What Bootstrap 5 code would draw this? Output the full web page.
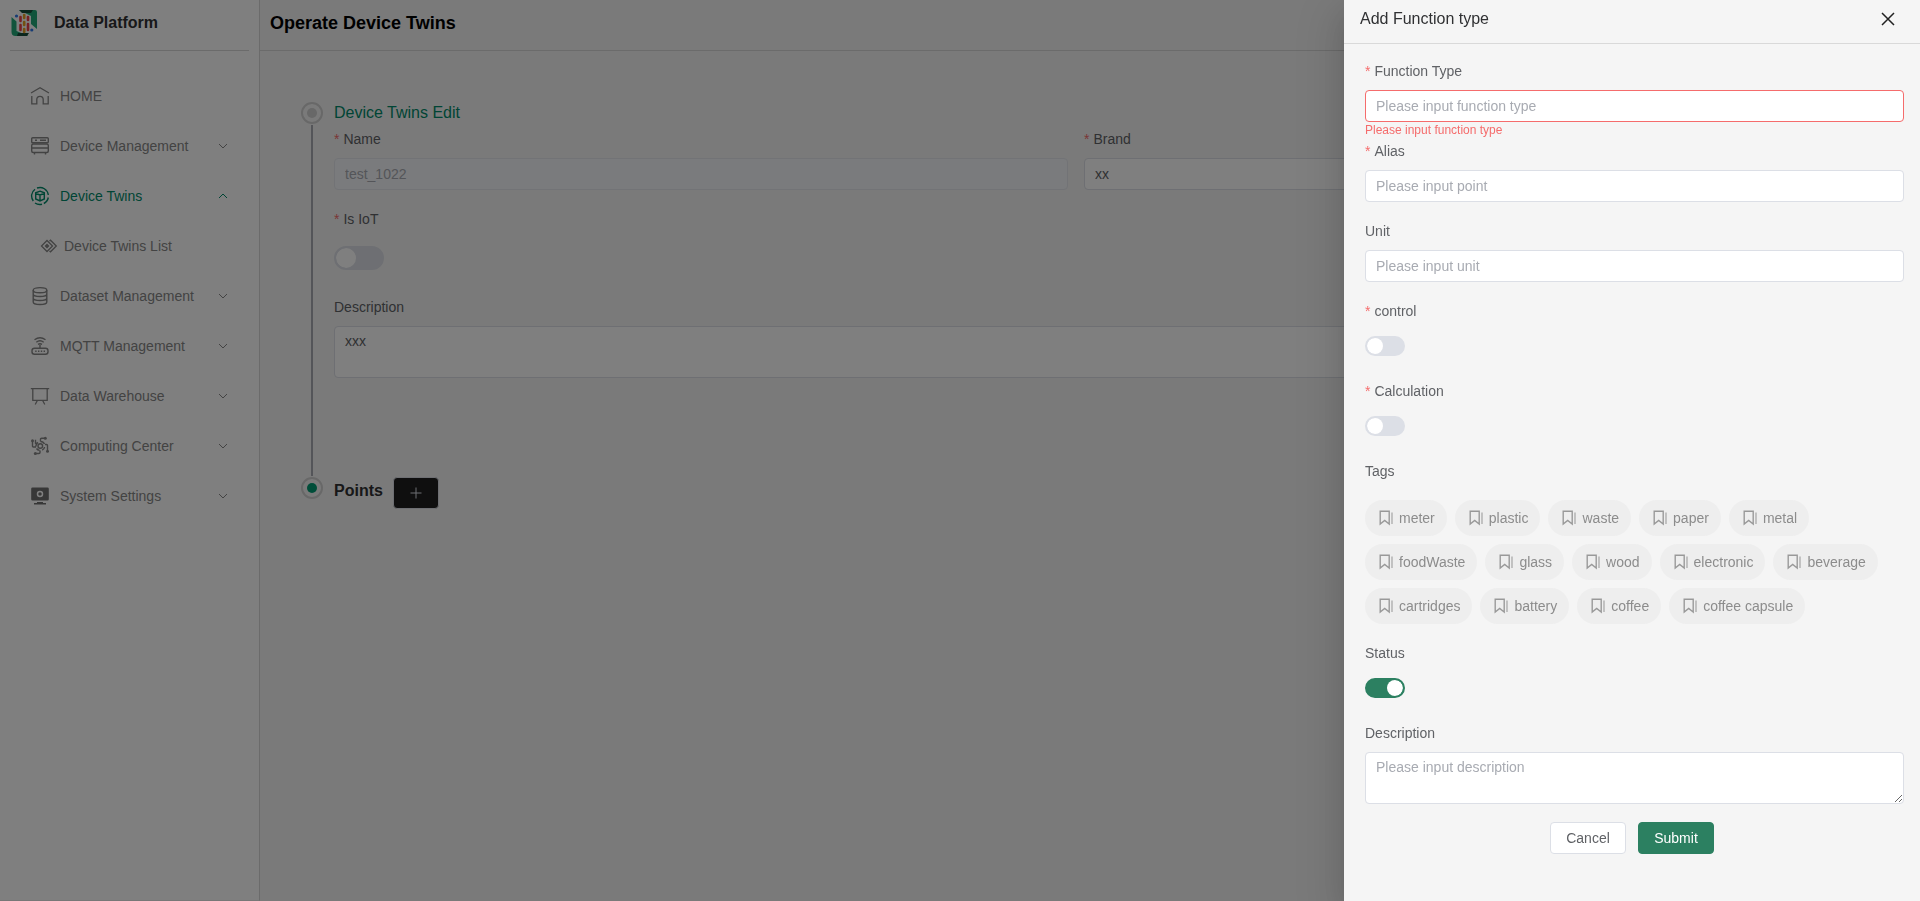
<!DOCTYPE html>
<html lang="en">
<head>
<meta charset="utf-8">
<meta name="viewport" content="width=device-width, initial-scale=1">
<title>Data Platform</title>
<link href="https://cdn.jsdelivr.net/npm/bootstrap@5.3.0/dist/css/bootstrap.min.css" rel="stylesheet">
<style>
:root { --line: #d6d6d6; --brand: #2c8061; --accent: #009a72; --field-line: #dcdfe6; --label: #606266; }
body { font-family: "Liberation Sans", Arial, sans-serif; font-size: 14px; line-height: 22px; color: #303133; background: #f5f5f5; }
svg { display: block; flex: none; }
h1, h2, h3, .brand-name { margin: 0; font-weight: 700; font-size: 16px; line-height: 28px; color: #303133; }

/* Sidebar */
.sidebar { width: 260px; flex: none; background: #fff; border-right: 1px solid var(--line); border-bottom: 1px solid #eee; }
.brand-bar { height: 51px; margin: 0 10px 20px 10px; padding-bottom: 5px; border-bottom: 1px solid var(--line); gap: 16px; }
.menu-link { height: 50px; padding: 0 30px; gap: 10px; color: #868686; text-decoration: none; }
.menu-link svg { stroke: currentColor; fill: none; }
.menu-link.open { color: #008a6a; }
.menu-link.sub { padding-left: 40px; gap: 6px; }

/* Page */
.page-head { height: 51px; padding: 0 10px 5px; border-bottom: 1px solid var(--line); }
.page-head h1 { font-size: 18px; color: #000; }
.page-body { padding: 51px 102px 0 40px; }
.step { gap: 10px; }
.step-rail { width: 24px; gap: 1px; padding-bottom: 1px; }
.step-dot { width: 22px; height: 22px; border: 2px solid #d0d0d0; border-radius: 50%; }
.step-dot::before { content: ""; width: 10px; height: 10px; border-radius: 50%; background: #d0d0d0; }
.step-dot.active::before { background: var(--accent); }
.step-line { width: 2px; background: #a8abb2; }
.step-content { padding-bottom: 81px; }
.step-title { font-weight: 400; line-height: 22px; margin-bottom: 4px; color: #008a6a; }
.btn-add { width: 46px; height: 32px; padding: 0; border-radius: 4px; --bs-btn-bg: #1f1f1f; --bs-btn-border-color: #dcdfe6; --bs-btn-color: #dcdfe6; --bs-btn-hover-bg: #333; }

/* Form parts */
.field { margin-bottom: 18px; }
.field > label, .field > .field-label { display: block; margin-bottom: 8px; color: var(--label); }
.required::before { content: "*"; color: #f56c6c; margin-right: 4px; }
.form-control { font-size: 14px; line-height: 21px; padding: 4px 10px; border-color: var(--field-line); border-radius: 4px; color: var(--label); background-color: #fff; }
input.form-control { height: 32px; }
textarea.form-control { min-height: 52px; height: 52px; }
.form-control::placeholder { color: #a8abb2; }
.form-control:disabled { background-color: #f5f7fa; border-color: #e4e7ed; color: #a8abb2; }
.form-control.is-invalid { border-color: #f56c6c; background-image: none; padding-right: 10px; }
.field-error { font-size: 12px; line-height: 16px; height: 18px; margin-bottom: -18px; color: #f56c6c; }
.switch-row { height: 32px; margin: 0; padding: 0; min-height: 0; }
.switch-row .form-check-input { width: 40px; height: 20px; margin: 0; border: 2px solid var(--field-line); background-color: var(--field-line); --bs-form-switch-bg: none;
  background-image: url("data:image/svg+xml,%3csvg xmlns='http://www.w3.org/2000/svg' viewBox='0 0 16 16'%3e%3ccircle cx='8' cy='8' r='8' fill='%23fff'/%3e%3c/svg%3e"); }
.switch-row .form-check-input:checked { background-color: var(--brand); border-color: var(--brand);
  background-image: url("data:image/svg+xml,%3csvg xmlns='http://www.w3.org/2000/svg' viewBox='0 0 16 16'%3e%3ccircle cx='8' cy='8' r='8' fill='%23fff'/%3e%3c/svg%3e"); }
.switch-row.large { height: 40px; }
.switch-row.large .form-check-input { width: 50px; height: 24px; }

/* Drawer */
.drawer.offcanvas { --bs-offcanvas-width: 30%; border: 0; background: #f5f5f5; box-shadow: 0 16px 48px 16px rgba(0,0,0,.08), 0 12px 32px rgba(0,0,0,.12), 0 8px 16px -8px rgba(0,0,0,.16); }
.drawer-head { height: 44px; padding: 0 16px 5px; border-bottom: 1px solid #d9d9d9; }
.drawer-head h2 { font-weight: 400; }
.drawer-close { width: 20px; height: 20px; margin-right: 6px; color: #222; }
.drawer-fields { padding: 16px 16px 0 21px; }
.tag-list { padding-top: 10px; gap: 8px; }
.tag-chip { height: 36px; padding: 0 12px; gap: 4px; border: 0; border-radius: 18px; background: #eee; color: #8c8c8c; }
.drawer-actions { gap: 12px; }
.drawer-actions .btn { width: 76px; height: 32px; padding: 0; font-size: 14px; border-radius: 4px; }
.btn-plain { --bs-btn-bg: #fff; --bs-btn-border-color: #dcdfe6; --bs-btn-color: #606266; --bs-btn-hover-bg: #f5f5f5; }
.btn-brand { --bs-btn-bg: #2c8061; --bs-btn-border-color: #2c8061; --bs-btn-color: #fff; --bs-btn-hover-bg: #256e53; --bs-btn-hover-color: #fff; font-weight: 500; }
</style>
</head>
<body>
<svg class="d-none" aria-hidden="true">
  <symbol id="chev-down" viewBox="0 0 12 12"><path d="M2 4l4 4 4-4"/></symbol>
  <symbol id="chev-up" viewBox="0 0 12 12"><path d="M2 8l4-4 4 4"/></symbol>
  <symbol id="tag" viewBox="0 0 18 18"><path d="M3.200 2.200h9v12.800l-4.500-3.500-4.500 3.500z" fill="none" stroke="#999" stroke-width="1.400"/><path d="M15 3.500v11.500" stroke="#aaa" stroke-width="1.300"/></symbol>
</svg>

<div class="d-flex min-vh-100">
  <aside class="sidebar">
    <div class="brand-bar d-flex align-items-center">
      <svg width="28" height="28" viewBox="0 0 28 28" aria-hidden="true">
        <path d="M9 1h16q2 0 2 2v17l-6-5V7z" fill="#22a978"/><path d="M9 1h14l-2 3H12z" fill="#174d3a"/>
        <path d="M1.500 8l5 4.500V22l12 5H5.500q-4 0-4-4z" fill="#22a978"/><path d="M8 24h11l-2 3H7z" fill="#174d3a"/>
        <g stroke-width="2.600" stroke-linecap="round"><path d="M10.500 8v4M10.500 16v5M18 8v3M18 15v6" stroke="#ed4249"/><path d="M14.200 6v3M14.200 13v3M14.200 20v3" stroke="#e6a020"/></g>
        <circle cx="6.500" cy="7" r="1.600" fill="#2f78e8"/><circle cx="21.800" cy="21" r="1.600" fill="#2f78e8"/>
      </svg>
      <span class="brand-name">Data Platform</span>
    </div>
    <nav class="d-flex flex-column">
      <a href="#" class="menu-link d-flex align-items-center">
        <svg width="20" height="20" viewBox="0 0 20 20" stroke-width="1.300"><path d="M1 7l9-5.200L19 7M1.800 10v7.800h5v-4.300a3.200 3.200 0 0 1 6.400 0v4.300h5V10"/></svg>HOME</a>
      <a href="#" class="menu-link d-flex align-items-center">
        <svg width="20" height="20" viewBox="0 0 20 20" stroke-width="1.400"><rect x="1.700" y="1.700" width="16.600" height="5" rx="1"/><rect x="1.700" y="8" width="16.600" height="8.500" rx="1.500"/><path d="M1.700 12h16.600M5 4.200h2M10 4.200h6M4.500 16.500v2M15.500 16.500v2"/></svg>
        <span class="flex-grow-1">Device Management</span><svg width="12" height="12"><use href="#chev-down"/></svg></a>
      <a href="#" class="menu-link open d-flex align-items-center">
        <svg width="20" height="20" viewBox="0 0 20 20" stroke-width="1.400"><path d="M7 2a8.400 8.400 0 0 1 11.300 7M18.300 11.500a8.400 8.400 0 0 1-4.500 6M12 18.200A8.400 8.400 0 0 1 5 17M3.300 15A8.400 8.400 0 0 1 5 3.200"/><path d="M10 5.200l4.300 1.600v6.200L10 15l-4.300-2V6.800zM5.700 7.500L10 9l4.300-1.500M10 9v6"/></svg>
        <span class="flex-grow-1">Device Twins</span><svg width="12" height="12"><use href="#chev-up"/></svg></a>
      <a href="#" class="menu-link sub d-flex align-items-center">
        <svg width="18" height="18" viewBox="0 0 18 18" stroke-width="1.300"><path d="M7 3.500L12.500 9 7 14.500 1.500 9zM9.500 4l1-.8L16.300 9l-5.800 5.800-1-.8"/><path d="M7 6.500L9.500 9 7 11.500 4.500 9z" fill="currentColor" stroke="none"/></svg>Device Twins List</a>
      <a href="#" class="menu-link d-flex align-items-center">
        <svg width="20" height="20" viewBox="0 0 20 20" stroke-width="1.400"><ellipse cx="10" cy="4.200" rx="6.800" ry="2.600"/><path d="M3.200 4.200v11.800c0 3.300 13.600 3.300 13.600 0V4.200M3.200 8c0 3.300 13.600 3.300 13.600 0M3.200 12c0 3.300 13.600 3.300 13.600 0"/></svg>
        <span class="flex-grow-1">Dataset Management</span><svg width="12" height="12"><use href="#chev-down"/></svg></a>
      <a href="#" class="menu-link d-flex align-items-center">
        <svg width="20" height="20" viewBox="0 0 20 20" stroke-width="1.400"><rect x="2" y="12.300" width="16" height="6" rx="2.500"/><path d="M10 9v3M4.500 3.800q5.500-4 11 0M6.300 6.200q3.700-2.800 7.400 0M8 8.400q2-1.300 4 0M5.200 15.300h1.400M8 15.300h1.400M10.800 15.300h1.400M13.600 15.300H15"/></svg>
        <span class="flex-grow-1">MQTT Management</span><svg width="12" height="12"><use href="#chev-down"/></svg></a>
      <a href="#" class="menu-link d-flex align-items-center">
        <svg width="20" height="20" viewBox="0 0 20 20" stroke-width="1.300"><path d="M.8 2.600h18.400M2.800 2.600v11.700h14.400V2.600M7.500 14.300L5.200 18.500M12.500 14.300l2.300 4.200"/></svg>
        <span class="flex-grow-1">Data Warehouse</span><svg width="12" height="12"><use href="#chev-down"/></svg></a>
      <a href="#" class="menu-link d-flex align-items-center">
        <svg width="20" height="20" viewBox="0 0 20 20" stroke-width="1.400"><circle cx="10.300" cy="10" r="2.300"/><path d="M6 10.500a4.400 4.400 0 0 1 2-4.200M10.500 5.500a4.400 4.400 0 0 1 4 2.500M14.600 11a4.400 4.400 0 0 1-2.400 3.200M9.500 14.400A4.400 4.400 0 0 1 6.500 12.500M10.500 5.500V3.200q0-1 1-1h3M15 8.500h1.500q1 0 1 1V14M10 14.500v2q0 1-1 1H6M6 11H3.500q-1 0-1-1V6M5.500 3.800v3.400L7.500 8"/><g fill="currentColor" stroke="none"><circle cx="15.300" cy="2.300" r="1.500"/><circle cx="17.500" cy="15.300" r="1.500"/><circle cx="5.300" cy="17.500" r="1.500"/><circle cx="2.500" cy="4.800" r="1.500"/></g></svg>
        <span class="flex-grow-1">Computing Center</span><svg width="12" height="12"><use href="#chev-down"/></svg></a>
      <a href="#" class="menu-link d-flex align-items-center">
        <svg width="20" height="20" viewBox="0 0 20 20"><path d="M2.500 1.500h15q1.300 0 1.300 1.300v10.400q0 1.300-1.300 1.300h-15q-1.300 0-1.300-1.300V2.800q0-1.300 1.300-1.300zM7 16h6v1h3v1.500H4V17h3z" fill="#6e6e6e" stroke="none"/><circle cx="10" cy="8" r="2.500" stroke="#fff" stroke-width="1.500"/></svg>
        <span class="flex-grow-1">System Settings</span><svg width="12" height="12"><use href="#chev-down"/></svg></a>
    </nav>
  </aside>

  <main class="flex-grow-1">
    <header class="page-head d-flex align-items-center"><h1>Operate Device Twins</h1></header>
    <div class="page-body">
      <section class="step d-flex">
        <div class="step-rail d-flex flex-column align-items-center">
          <span class="step-dot d-flex align-items-center justify-content-center"></span>
          <span class="step-line flex-grow-1"></span>
        </div>
        <form class="step-content flex-grow-1">
          <h2 class="step-title">Device Twins Edit</h2>
          <div class="row gx-3">
            <div class="col-6 field"><label class="required" for="twin-name">Name</label><input id="twin-name" class="form-control" value="test_1022" disabled></div>
            <div class="col-6 field"><label class="required" for="twin-brand">Brand</label><input id="twin-brand" class="form-control" value="xx"></div>
          </div>
          <div class="field"><label class="required" for="twin-iot">Is IoT</label>
            <div class="form-check form-switch switch-row large d-flex align-items-center"><input id="twin-iot" class="form-check-input" type="checkbox" role="switch"></div></div>
          <div class="field"><label for="twin-desc">Description</label><textarea id="twin-desc" class="form-control" rows="2">xxx</textarea></div>
        </form>
      </section>
      <section class="step d-flex">
        <div class="step-rail d-flex flex-column align-items-center">
          <span class="step-dot active d-flex align-items-center justify-content-center"></span>
        </div>
        <div class="step d-flex align-items-start">
          <h2>Points</h2>
          <button type="button" class="btn btn-add d-flex align-items-center justify-content-center" aria-label="Add point"><svg width="14" height="14" viewBox="0 0 14 14" stroke="currentColor"><path d="M7 1.500v11M1.500 7h11"/></svg></button>
        </div>
      </section>
    </div>
  </main>
</div>

<div class="offcanvas offcanvas-end show drawer" tabindex="-1" aria-labelledby="drawer-title">
  <div class="drawer-head d-flex align-items-center justify-content-between">
    <h2 id="drawer-title">Add Function type</h2>
    <button type="button" class="btn drawer-close d-flex align-items-center justify-content-center p-0 border-0" data-bs-dismiss="offcanvas" aria-label="Close"><svg width="14" height="14" viewBox="0 0 14 14" stroke="currentColor" stroke-width="1.500"><path d="M1 1l12 12M13 1L1 13"/></svg></button>
  </div>
  <form class="overflow-auto" novalidate>
    <div class="drawer-fields">
      <div class="field"><label class="required" for="fn-type">Function Type</label><input id="fn-type" class="form-control is-invalid" placeholder="Please input function type"><div class="field-error">Please input function type</div></div>
      <div class="field"><label class="required" for="fn-alias">Alias</label><input id="fn-alias" class="form-control" placeholder="Please input point"></div>
      <div class="field"><label for="fn-unit">Unit</label><input id="fn-unit" class="form-control" placeholder="Please input unit"></div>
      <div class="field"><label class="required" for="fn-control">control</label><div class="form-check form-switch switch-row d-flex align-items-center"><input id="fn-control" class="form-check-input" type="checkbox" role="switch"></div></div>
      <div class="field"><label class="required" for="fn-calc">Calculation</label><div class="form-check form-switch switch-row d-flex align-items-center"><input id="fn-calc" class="form-check-input" type="checkbox" role="switch"></div></div>
      <div class="field"><span class="field-label">Tags</span>
        <div class="tag-list d-flex flex-wrap">
          <button type="button" class="tag-chip d-flex align-items-center"><svg width="18" height="18"><use href="#tag"/></svg>meter</button>
          <button type="button" class="tag-chip d-flex align-items-center"><svg width="18" height="18"><use href="#tag"/></svg>plastic</button>
          <button type="button" class="tag-chip d-flex align-items-center"><svg width="18" height="18"><use href="#tag"/></svg>waste</button>
          <button type="button" class="tag-chip d-flex align-items-center"><svg width="18" height="18"><use href="#tag"/></svg>paper</button>
          <button type="button" class="tag-chip d-flex align-items-center"><svg width="18" height="18"><use href="#tag"/></svg>metal</button>
          <button type="button" class="tag-chip d-flex align-items-center"><svg width="18" height="18"><use href="#tag"/></svg>foodWaste</button>
          <button type="button" class="tag-chip d-flex align-items-center"><svg width="18" height="18"><use href="#tag"/></svg>glass</button>
          <button type="button" class="tag-chip d-flex align-items-center"><svg width="18" height="18"><use href="#tag"/></svg>wood</button>
          <button type="button" class="tag-chip d-flex align-items-center"><svg width="18" height="18"><use href="#tag"/></svg>electronic</button>
          <button type="button" class="tag-chip d-flex align-items-center"><svg width="18" height="18"><use href="#tag"/></svg>beverage</button>
          <button type="button" class="tag-chip d-flex align-items-center"><svg width="18" height="18"><use href="#tag"/></svg>cartridges</button>
          <button type="button" class="tag-chip d-flex align-items-center"><svg width="18" height="18"><use href="#tag"/></svg>battery</button>
          <button type="button" class="tag-chip d-flex align-items-center"><svg width="18" height="18"><use href="#tag"/></svg>coffee</button>
          <button type="button" class="tag-chip d-flex align-items-center"><svg width="18" height="18"><use href="#tag"/></svg>coffee capsule</button>
        </div>
      </div>
      <div class="field"><label for="fn-status">Status</label><div class="form-check form-switch switch-row d-flex align-items-center"><input id="fn-status" class="form-check-input" type="checkbox" role="switch" checked></div></div>
      <div class="field"><label for="fn-desc">Description</label><textarea id="fn-desc" class="form-control" rows="2" placeholder="Please input description"></textarea></div>
    </div>
    <div class="drawer-actions d-flex justify-content-center">
      <button type="button" class="btn btn-plain" data-bs-dismiss="offcanvas">Cancel</button>
      <button type="submit" class="btn btn-brand">Submit</button>
    </div>
  </form>
</div>
<script src="https://cdn.jsdelivr.net/npm/bootstrap@5.3.0/dist/js/bootstrap.bundle.min.js"></script>
</body>
</html>
